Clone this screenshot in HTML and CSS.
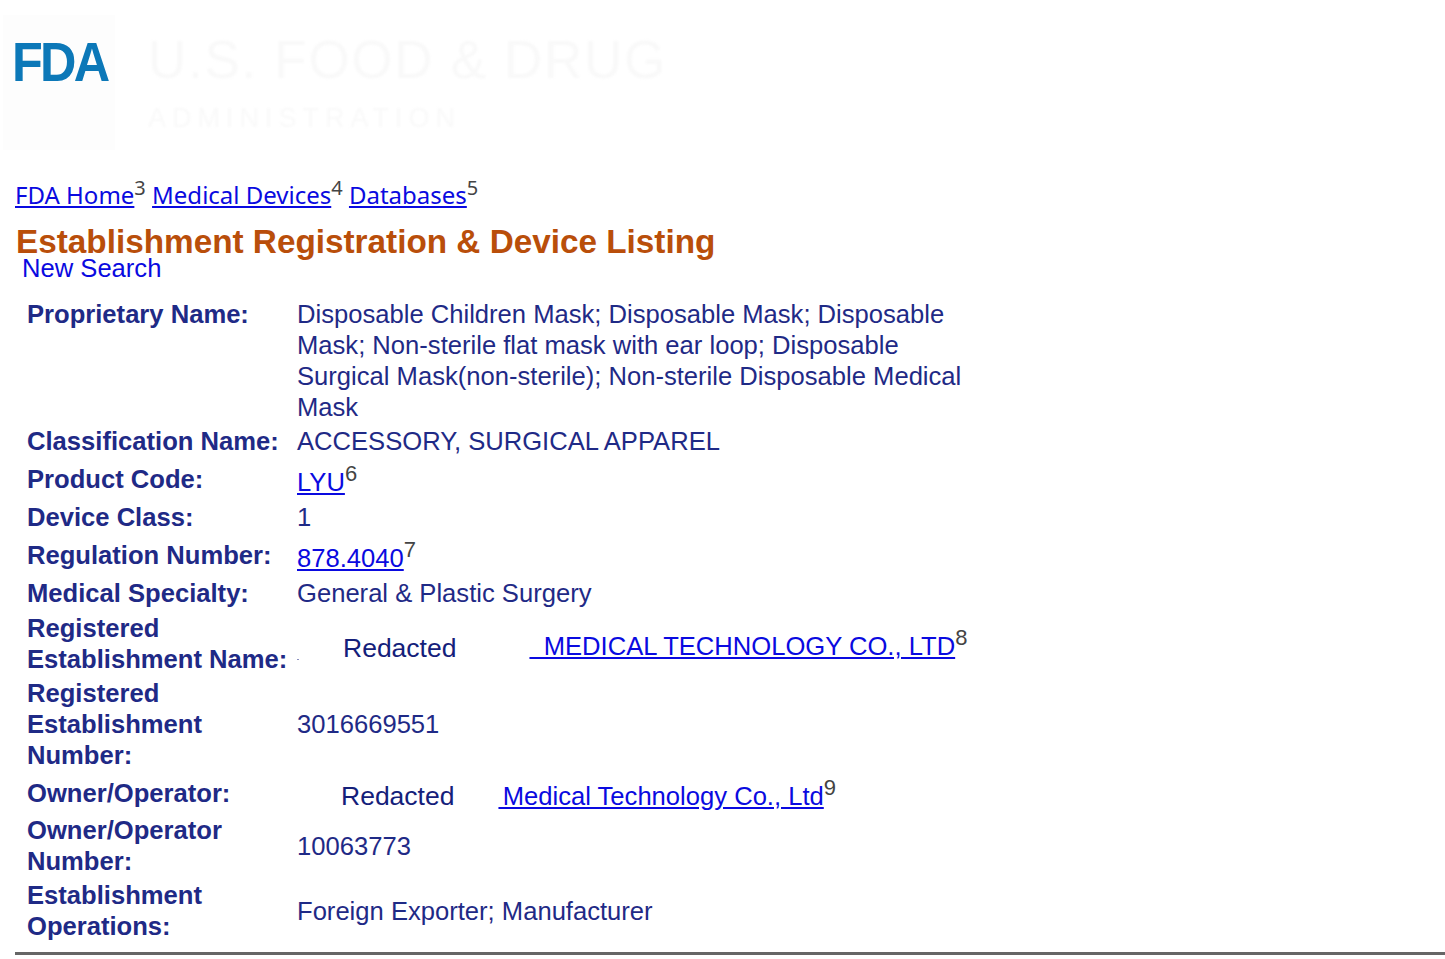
FILE: index.html
```html
<!DOCTYPE html>
<html>
    <head>
        <title>Establishment Registration &amp; Device Listing</title>
        <link rel="stylesheet" href="styles.css">
    </head>
    <body>
        <div class="banner">
            <div class="logo-box"><span class="logo">FDA</span></div>
            <div class="agency">
                <div class="agency-top">U.S. FOOD &amp; DRUG</div>
                <div class="agency-sub">ADMINISTRATION</div>
            </div>
        </div>

        <div class="crumbs">
            <a href="#">FDA Home</a><sup>3</sup>
            <a href="#">Medical Devices</a><sup>4</sup>
            <a href="#">Databases</a><sup>5</sup>
        </div>

        <h1>Establishment Registration &amp; Device Listing</h1>
        <div class="new-search">New Search</div>

        <table class="listing">
            <tr>
                <th class="top">Proprietary Name:</th>
                <td>Disposable Children Mask; Disposable Mask; Disposable Mask; Non-sterile flat mask with ear loop; Disposable Surgical Mask(non-sterile); Non-sterile Disposable Medical Mask</td>
            </tr>
            <tr>
                <th>Classification Name:</th>
                <td>ACCESSORY, SURGICAL APPAREL</td>
            </tr>
            <tr class="linked">
                <th>Product Code:</th>
                <td><a href="#">LYU</a><sup>6</sup></td>
            </tr>
            <tr>
                <th>Device Class:</th>
                <td>1</td>
            </tr>
            <tr class="linked">
                <th>Regulation Number:</th>
                <td><a href="#">878.4040</a><sup>7</sup></td>
            </tr>
            <tr>
                <th>Medical Specialty:</th>
                <td>General &amp; Plastic Surgery</td>
            </tr>
            <tr class="est-row">
                <th>Registered Establishment Name:</th>
                <td>
                    <div class="redacted-row">
                        <span class="stray"></span>
                        <span class="redacted">Redacted</span>
                        <span class="est-link"><a href="#">&nbsp;&nbsp;MEDICAL TECHNOLOGY CO., LTD</a><sup>8</sup></span>
                    </div>
                </td>
            </tr>
            <tr>
                <th>Registered Establishment Number:</th>
                <td>3016669551</td>
            </tr>
            <tr class="linked owner-row">
                <th>Owner/Operator:</th>
                <td>
                    <div class="redacted-row owner">
                        <span class="redacted">Redacted</span>
                        <span class="owner-link"><a href="#">&#8198;Medical Technology Co., Ltd</a><sup>9</sup></span>
                    </div>
                </td>
            </tr>
            <tr>
                <th>Owner/Operator Number:</th>
                <td>10063773</td>
            </tr>
            <tr>
                <th>Establishment Operations:</th>
                <td>Foreign Exporter; Manufacturer</td>
            </tr>
        </table>

        <hr />
    </body>
</html>
```

FILE: styles.css
```css
html {
    font-size: 25.6px;
}

body {
    margin: 0;
    background: #fff;
    color: #1f2a86;
    font-family: "Liberation Sans", Arial, sans-serif;
    overflow: hidden;
    height: 959px;
}

a {
    color: #0a0ae0;
}

sup {
    color: #444;
    font-size: 20px;
    line-height: 0;
}

.banner {
    display: flex;
    height: 177px;
    padding: 15px 0 0 3px;
    box-sizing: border-box;
}

.logo-box {
    width: 112px;
    height: 135px;
    background: #fdfdfd;
    box-sizing: border-box;
    padding: 16px 0 0 9px;
}

.logo {
    display: block;
    color: #0c78b8;
    font-size: 56px;
    font-weight: bold;
    letter-spacing: -3px;
    line-height: 62px;
    transform: scaleX(0.9);
    transform-origin: left;
    filter: blur(0.6px);
}

.agency {
    color: #f9f9f9;
    padding: 14px 0 0 33px;
    filter: blur(0.8px);
}

.agency-top {
    font-size: 53px;
    line-height: 62px;
    letter-spacing: 1.7px;
}

.agency-sub {
    font-size: 27px;
    line-height: 32px;
    margin-top: 11px;
    letter-spacing: 6px;
}

.crumbs {
    font-family: "Noto Sans", "Open Sans", sans-serif;
    font-size: 24px;
    line-height: 36px;
    margin: 0 0 0 15px;
    height: 36px;
}

h1 {
    color: #b94e0a;
    font-size: 33.3px;
    line-height: 32px;
    margin: 13px 0 0 16px;
}

.new-search {
    color: #0a0ae0;
    line-height: 20px;
    margin: 0 0 0 22px;
}

.listing {
    border-collapse: collapse;
    table-layout: fixed;
    margin: 20px 0 0 24px;
    width: 950px;
    font-size: 25.6px;
    line-height: 31px;
}

.listing sup {
    font-size: 22px;
}

.listing th {
    width: 270px;
    padding: 1px 3px 2px;
    box-sizing: border-box;
    color: #1f2a86;
    font-weight: bold;
    text-align: left;
}

.listing th.top {
    vertical-align: top;
}

.listing td {
    padding: 1px 3px 2px;
}

.listing .linked td {
    padding: 8px 3px 3px;
}

.listing .owner-row td {
    padding-bottom: 2px;
}

.listing .est-row td {
    padding: 20px 3px 13px;
}

.redacted-row {
    display: flex;
    white-space: nowrap;
}

.redacted {
    color: #14207a;
    font-size: 26.5px;
}

.stray {
    width: 2px;
    height: 1px;
    margin: 0 44px 4px 0;
    align-self: flex-end;
    background: #8a8fc0;
}

.est-row .redacted {
    margin-top: 2px;
}

.est-link {
    margin-left: 73px;
}

.owner {
    padding-left: 44px;
}

.owner-link {
    margin-left: 44px;
}

hr {
    border: 0;
    background: #666;
    height: 3px;
    margin: 8px 0 0 15px;
}
```
